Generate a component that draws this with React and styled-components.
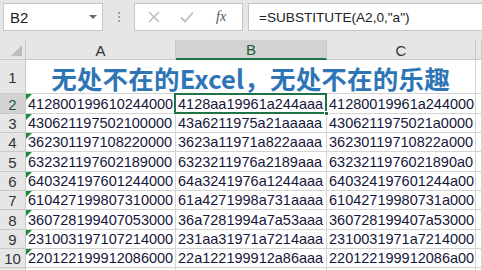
import React from "react";
import styled, { createGlobalStyle, css } from "styled-components";

const GlobalStyle = createGlobalStyle`
  html, body {
    margin: 0;
    padding: 0;
    background: #ffffff;
  }
  * {
    box-sizing: border-box;
  }
`;

const green = "#217346";
const grid = "#d4d4d4";
const headBorder = "#c8c8c8";

const Page = styled.div`
  width: 482px;
  height: 270px;
  overflow: hidden;
  font-family: "Liberation Sans", Arial, sans-serif;
  background: #ffffff;
`;

const Toolbar = styled.div`
  height: 40px;
  background: #e6e6e6;
  display: flex;
  align-items: flex-start;
  padding: 3px 0 0 3px;
`;

const NameBox = styled.div`
  width: 100px;
  height: 28px;
  background: #ffffff;
  border: 1px solid #c6c6c6;
  display: flex;
  align-items: center;
  justify-content: space-between;
  padding: 0 5px 0 6px;
  font-size: 15px;
  color: #222;
`;

const Caret = styled.span`
  width: 0;
  height: 0;
  border-left: 4px solid transparent;
  border-right: 4px solid transparent;
  border-top: 4px solid #6a6a6a;
`;

const Grip = styled.div`
  width: 31px;
  height: 28px;
  display: flex;
  flex-direction: column;
  align-items: center;
  justify-content: center;
  gap: 2px;

  span {
    width: 2px;
    height: 2px;
    background: #a0a0a0;
  }
`;

const ButtonBox = styled.div`
  width: 109px;
  height: 28px;
  background: #ffffff;
  border: 1px solid #c6c6c6;
  display: flex;
  align-items: center;
  justify-content: space-around;
  padding: 0 4px 0 2px;
`;

const ToolGlyph = styled.span`
  width: 24px;
  display: flex;
  justify-content: center;
  color: #bdbdbd;
`;

const Fx = styled.span`
  width: 24px;
  text-align: center;
  font-family: "Liberation Serif", serif;
  font-style: italic;
  font-size: 14px;
  color: #555;
`;

const FormulaBox = styled.div`
  flex: 1;
  height: 28px;
  margin-left: 5px;
  margin-right: -4px;
  background: #ffffff;
  border: 1px solid #c6c6c6;
  display: flex;
  align-items: center;
  padding-left: 10px;
  font-size: 13.6px;
  color: #222;
  white-space: nowrap;
`;

const Sheet = styled.div`
  display: grid;
  grid-template-columns: 26px 150px 151px 149px 1fr;
`;

const Head = styled.div`
  height: ${(p) => p.$h}px;
  background: ${(p) => (p.$active ? "#d2d2d2" : "#e6e6e6")};
  border-right: 1px solid ${headBorder};
  border-bottom: ${(p) =>
    p.$active && p.$col ? `2px solid ${green}` : `1px solid ${headBorder}`};
  color: ${(p) => (p.$active ? "#1d5c38" : "#333")};
  font-size: 15px;
  display: flex;
  align-items: center;
  justify-content: center;
  padding-top: 1px;
`;

const Corner = styled(Head)`
  position: relative;
  &::after {
    content: "";
    position: absolute;
    right: 3px;
    bottom: 3px;
    border-left: 11px solid transparent;
    border-bottom: 11px solid #bdbdbd;
  }
`;

const Cell = styled.div`
  position: relative;
  height: ${(p) => p.$h}px;
  border-right: 1px solid ${grid};
  border-bottom: 1px solid ${grid};
  font-size: 14.5px;
  color: #16163a;
  display: flex;
  align-items: flex-end;
  padding: 0 0 1px 2px;
  white-space: nowrap;
  overflow: hidden;
  grid-column: ${(p) => (p.$span ? `span ${p.$span}` : "auto")};

  ${(p) =>
    p.$flag &&
    css`
      &::before {
        content: "";
        position: absolute;
        left: 0;
        top: 0;
        border-top: 6px solid #1b8a3c;
        border-right: 6px solid transparent;
      }
    `}

  ${(p) =>
    p.$selected &&
    css`
      overflow: visible;
      &::after {
        content: "";
        position: absolute;
        left: -2px;
        top: -1px;
        right: -1px;
        bottom: -1px;
        border: 2px solid ${green};
        pointer-events: none;
      }
    `}
`;

const Handle = styled.span`
  position: absolute;
  right: -3px;
  bottom: -3px;
  width: 5px;
  height: 5px;
  background: ${green};
  border: 1px solid #ffffff;
  z-index: 2;
`;

const Title = styled(Cell)`
  justify-content: center;
  align-items: center;
  overflow: visible;
  padding: 3px 0 0 0;
  line-height: 1;
  font-family: "Noto Sans CJK SC", "Liberation Sans", sans-serif;
  font-weight: 700;
  font-size: 25.5px;
  color: #2e75b6;
  letter-spacing: 0.2px;
`;

const ids = [
  "412800199610244000",
  "430621197502100000",
  "362301197108220000",
  "632321197602189000",
  "640324197601244000",
  "610427199807310000",
  "360728199407053000",
  "231003197107214000",
  "220122199912086000",
];

const heights = [20, 19, 19, 20, 19, 19, 20, 19, 19];

const replaceNth = (s, n) => {
  let count = 0;
  return s.replace(/0/g, (m) => (++count === n ? "a" : m));
};

const Cross = () => (
  <svg width="14" height="14" viewBox="0 0 14 14">
    <path d="M2 2 L12 12 M12 2 L2 12" stroke="currentColor" strokeWidth="1.6" />
  </svg>
);

const Check = () => (
  <svg width="16" height="14" viewBox="0 0 16 14">
    <path d="M2 7.5 L6 11.5 L14 2.5" stroke="currentColor" strokeWidth="1.8" fill="none" />
  </svg>
);

export default function App() {
  return (
    <Page>
      <GlobalStyle />
      <Toolbar>
        <NameBox>
          B2
          <Caret />
        </NameBox>
        <Grip>
          <span />
          <span />
          <span />
        </Grip>
        <ButtonBox>
          <ToolGlyph>
            <Cross />
          </ToolGlyph>
          <ToolGlyph>
            <Check />
          </ToolGlyph>
          <Fx>fx</Fx>
        </ButtonBox>
        <FormulaBox>=SUBSTITUTE(A2,0,"a")</FormulaBox>
      </Toolbar>
      <Sheet>
        <Corner $h={20} />
        <Head $h={20}>A</Head>
        <Head $h={20} $active $col>
          B
        </Head>
        <Head $h={20}>C</Head>
        <Head $h={20} />

        <Head $h={34}>1</Head>
        <Title $h={34} $span={3}>
          无处不在的Excel，无处不在的乐趣
        </Title>
        <Cell $h={34} />

        {ids.map((id, i) => (
          <React.Fragment key={id}>
            <Head $h={heights[i]} $active={i === 0}>
              {i + 2}
            </Head>
            <Cell $h={heights[i]} $flag>
              {id}
            </Cell>
            <Cell $h={heights[i]} $selected={i === 0}>
              {id.replace(/0/g, "a")}
              {i === 0 && <Handle />}
            </Cell>
            <Cell $h={heights[i]}>{replaceNth(id, 3)}</Cell>
            <Cell $h={heights[i]} />
          </React.Fragment>
        ))}

        <Head $h={20} />
        <Cell $h={20} />
        <Cell $h={20} />
        <Cell $h={20} />
        <Cell $h={20} />
      </Sheet>
    </Page>
  );
}
